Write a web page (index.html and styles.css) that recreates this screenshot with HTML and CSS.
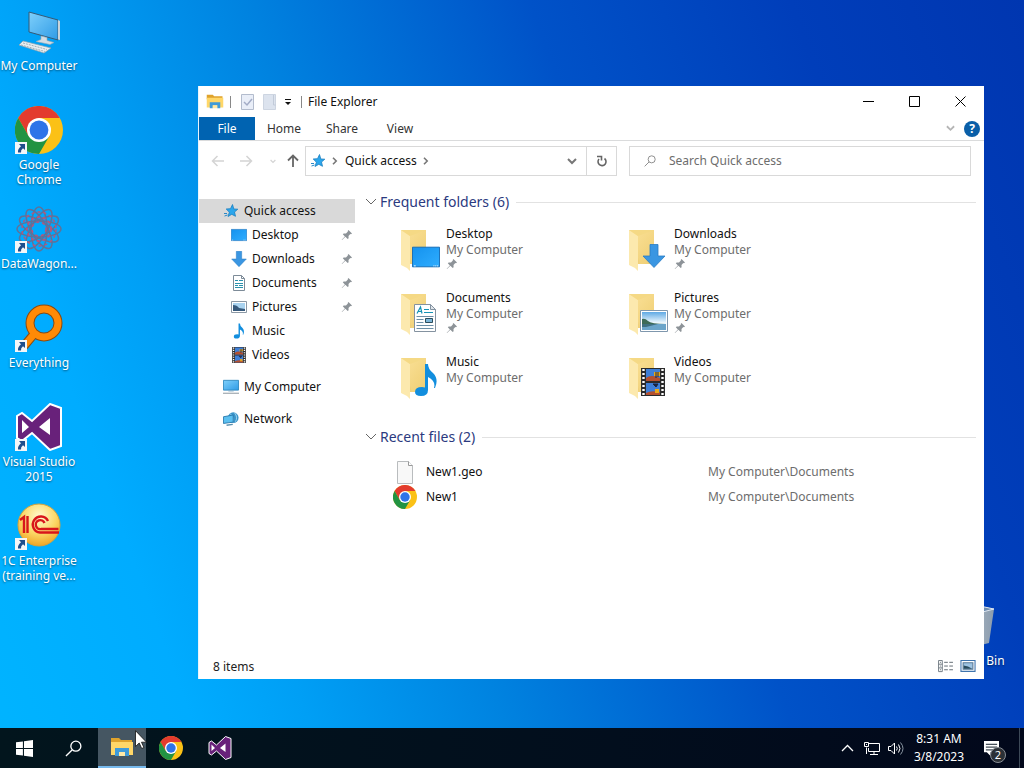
FILE: index.html
```html
<!DOCTYPE html>
<html lang="en">
<head>
    <meta charset="UTF-8">
    <meta name="viewport" content="width=device-width, initial-scale=1.0">
    <title>File Explorer</title>
    <link rel="stylesheet" href="styles.css">
</head>
<body>
    <!-- shared icons -->
    <svg class="sprite" aria-hidden="true">
      <defs>
        <linearGradient id="g-screen" x1="0" y1="0" x2="1" y2="1">
          <stop offset="0" stop-color="#7fd0fb"/><stop offset="1" stop-color="#2f9be6"/>
        </linearGradient>
        <linearGradient id="g-blue" x1="0" y1="0" x2="1" y2="1">
          <stop offset="0" stop-color="#1492ee"/><stop offset="1" stop-color="#2fadff"/>
        </linearGradient>
        <linearGradient id="g-fold" x1="0" y1="0" x2="1" y2="1">
          <stop offset="0" stop-color="#fbe29a"/><stop offset="1" stop-color="#efce73"/>
        </linearGradient>
        <linearGradient id="g-sky" x1="0" y1="0" x2="0" y2="1">
          <stop offset="0" stop-color="#5fa9e4"/><stop offset=".6" stop-color="#eef8fd"/>
        </linearGradient>
        <radialGradient id="g-gold" cx=".5" cy=".3" r=".75">
          <stop offset="0" stop-color="#fffbd0"/><stop offset=".55" stop-color="#fbd765"/><stop offset="1" stop-color="#ee9d1c"/>
        </radialGradient>
        <linearGradient id="g-bin" x1="0" y1="0" x2="1" y2="0">
          <stop offset="0" stop-color="#c3cbd2"/><stop offset="1" stop-color="#8b9cae"/>
        </linearGradient>
      </defs>
      <symbol id="chrome" viewBox="0 0 48 48">
        <circle cx="24" cy="24" r="24" fill="#fbc116"/>
        <path d="M24 12h20.8A24 24 0 0 0 3.2 12l10.4 18z" fill="#e33b2e"/>
        <path d="M3.2 12A24 24 0 0 0 24 48l10.4-18-10.4 4-10.4-4z" fill="#229342"/>
        <circle cx="24" cy="24" r="12" fill="#fff"/>
        <circle cx="24" cy="24" r="9.4" fill="#2f74e8"/>
      </symbol>
      <symbol id="vs" viewBox="0 0 48 48">
        <path d="M35 1 46 5v38l-11 4-18-17-10 8-5-3V13l5-3 10 8z" fill="#68217a" stroke="#fff" stroke-width="2"/>
        <path d="M35 15v17L24 24zM7 17v13l7-6z" fill="#fff"/>
      </symbol>
      <symbol id="shortcut" viewBox="0 0 12 12">
        <path d="M0 0h12v12H0z" fill="#f4f6f8"/>
        <path d="M4 2h6v6L8 6.300Q5.500 8 6 10.500H3Q2.500 7 6 4.200z" fill="#1f4e8c"/>
      </symbol>
      <symbol id="folder" viewBox="0 0 28 44">
        <path d="M1 2h25v34H9z" fill="#f0d07a"/>
        <path d="M1 2h25v34H12z" fill="url(#g-fold)"/>
        <path d="M1 2 10 8v35L7 40 1 37z" fill="#fce9ae"/>
        <path d="M1 2h25L10 8z" fill="#f5d985"/>
      </symbol>
      <symbol id="explorer" viewBox="0 0 24 20">
        <path d="M1 1h8l2 2h11v4H1z" fill="#dfa32c"/>
        <path d="M1 5h22v13H1z" fill="#ffd768"/>
        <path d="M5 19v-8h14v8h-4v-4H9v4z" fill="#3f9bd9"/>
        <path d="M9 15h6v4H9z" fill="#ffe9a6"/>
      </symbol>
      <symbol id="pin" viewBox="0 0 12 12">
        <path d="m7.500 1 3.500 3.500-1 .7-.7-.2-1.800 2 .1 2.200-.9.900-2.300-2.300L1 11l-.3-.3L3.900 7.400 1.800 5.300l.9-.9 2.300.1 1.900-1.900-.2-.7z" fill="#8d9398"/>
      </symbol>
      <symbol id="star" viewBox="0 0 16 16">
        <path d="M9.500 1.500 10.800 6l4 .2-3.300 2.800 1 4.300-3.700-2-3.800 2.200 1.400-4.300L3.200 6l4.300-.3z" fill="#2ba6ec" stroke="#1b7fc0" stroke-width=".8"/>
        <path d="M1 10.500h3M1.500 13l3-1" stroke="#2788c8" stroke-width="1"/>
      </symbol>
      <symbol id="desktop" viewBox="0 0 30 22">
        <path d="M.5.500h29v21H.5z" fill="url(#g-blue)" stroke="#1268b3"/>
        <path d="M2 20.500h2m19 0h1m1 0h1m1 0h1" stroke="#fff"/>
      </symbol>
      <symbol id="download" viewBox="0 0 24 24">
        <path d="M8 .5h8V12h7L12 23.500 1 12h7z" fill="#3a96e2" stroke="#2a7cc4" stroke-width=".8"/>
      </symbol>
      <symbol id="document" viewBox="0 0 22 28">
        <path d="M.5.500h16l5 5v22H.5z" fill="#fff" stroke="#8492a0"/>
        <path d="M16.500.500v5h5z" fill="#dfe5ea" stroke="#8492a0"/>
        <path d="M3 9.500 6.500 3 8 9.500M4.500 7.500h3M10 5.500h5M10 8.500h9" fill="none" stroke="#1593b5" stroke-width="1.200"/>
        <path d="M2.500 12.500h17M2.500 15.500h7m-7 3h7m-7 3h17m-17 3h17" stroke="#6c8fa6"/>
        <path d="M11.500 14.500h7v4h-7z" fill="#7fb7d9" stroke="#2c4c5b"/>
      </symbol>
      <symbol id="picture" viewBox="0 0 28 22">
        <path d="M.5.500h27v21H.5z" fill="#fff" stroke="#7f97ad"/>
        <path d="M2 2h24v18H2z" fill="url(#g-sky)"/>
        <path d="M2 9q3-1 6 2t18 3H2z" fill="#3d6b57"/>
        <path d="M2 14h24v6H2z" fill="#6ba5ca"/>
        <path d="M2 14h16l-12 3H2z" fill="#3f7080"/>
      </symbol>
      <symbol id="music" viewBox="0 0 22 34">
        <path d="M10 1h3q0 5 5 9 6 6 2 15h-1q2-7-6-11v13q0 6-7 6-6 0-6-4 0-5 7-5l3 .5z" fill="#128ede"/>
      </symbol>
      <symbol id="video" viewBox="0 0 24 28">
        <path d="M0 0h24v28H0z" fill="#2b2b2b"/>
        <path d="M2.500 1v27M21.500 1v27" stroke="#fff" stroke-width="2.400" stroke-dasharray="2 2"/>
        <path d="M5 1h14v12H5zM5 15h14v12H5z" fill="#3f7fd6"/>
        <path d="M5 10q5-4 14 0v3H5zM5 25q5-3 14-1v3H5z" fill="#b5502f"/>
        <path d="M13 4h6v4h-6zM14 21h4v4h-4z" fill="#e9a91c"/>
        <path d="M15 4v6M17 4v5M12 16h5l-2 3z" stroke="#1b2440" fill="#1b2440"/>
      </symbol>
      <symbol id="monitor" viewBox="0 0 18 16">
        <path d="M.5.500h17v11H.5z" fill="url(#g-screen)" stroke="#2c86be"/>
        <path d="M6 12.500h6" stroke="#82a9c1"/>
        <path d="M0 15h18" stroke="#7e8b94"/>
      </symbol>
      <symbol id="network" viewBox="0 0 18 16">
        <circle cx="11.500" cy="6.500" r="6" fill="#3b94c9"/>
        <path d="M8 2q5 4 3 10M13 1q4 5 1 10" fill="none" stroke="#a8dcf4"/>
        <path d="m.5 5.500 11-2v8l-11 1.500z" fill="#5cc0f0" stroke="#2576ac"/>
        <path d="m4 15 7-1" stroke="#5a8fae" stroke-width="1.500"/>
      </symbol>
      <symbol id="chev-down" viewBox="0 0 12 8">
        <path d="m1 1 5 5 5-5" fill="none" stroke="currentColor"/>
      </symbol>
      <symbol id="chev-bold" viewBox="0 0 10 7">
        <path d="m1 1 4 4 4-4" fill="none" stroke="currentColor" stroke-width="2"/>
      </symbol>
      <symbol id="arrow" viewBox="0 0 14 12">
        <path d="M13 6H1.500M6.500 1l-5 5 5 5" fill="none" stroke="currentColor" stroke-width="1.500"/>
      </symbol>
      <symbol id="arrow-up" viewBox="0 0 12 14">
        <path d="M6 13V2M1 6.500l5-5 5 5" fill="none" stroke="currentColor" stroke-width="1.800"/>
      </symbol>
      <symbol id="lens" viewBox="0 0 18 18">
        <path d="M7.500 10.500 1 17" fill="none" stroke="currentColor" stroke-width="1.400"/>
        <circle cx="11.500" cy="6.500" r="5.300" fill="none" stroke="currentColor" stroke-width="1.400"/>
      </symbol>
    </svg>

    <main class="desktop">
      <div class="desktop-icons">
        <a href="#" class="desktop-item">
          <span class="desktop-icon">
            <svg viewBox="0 0 48 48">
              <path d="m14 5 29 8v20l-29-8z" fill="url(#g-screen)" stroke="#355a76" stroke-width="1"/>
              <path d="m43 13 2 1v19l-2-.5z" fill="#c9d3da"/>
              <path d="m26 29 6 1.500v3l7 2-4 2-14-3 5-2z" fill="#d4dde4" stroke="#9aa8b2" stroke-width=".6"/>
              <path d="m8 34 28 7-7 5-25-8z" fill="#e9eef1" stroke="#94a3ae" stroke-width=".7"/>
              <path d="m8 36 24 6.500M6 38l24 6.500" stroke="#a2aeb6" stroke-dasharray="2 1"/>
            </svg>
          </span>
          <span class="desktop-label">My Computer</span>
        </a>
        <a href="#" class="desktop-item">
          <span class="desktop-icon">
            <svg><use href="#chrome"/></svg>
            <svg class="badge"><use href="#shortcut"/></svg>
          </span>
          <span class="desktop-label">Google Chrome</span>
        </a>
        <a href="#" class="desktop-item">
          <span class="desktop-icon">
            <svg viewBox="0 0 48 48" fill="none" stroke="#5f7299" stroke-width="1.500">
              <g>
                <ellipse cx="24" cy="24" rx="22" ry="8"/>
                <ellipse cx="24" cy="24" rx="22" ry="8" transform="rotate(30 24 24)"/>
                <ellipse cx="24" cy="24" rx="22" ry="8" transform="rotate(60 24 24)"/>
                <ellipse cx="24" cy="24" rx="22" ry="8" transform="rotate(90 24 24)"/>
                <ellipse cx="24" cy="24" rx="22" ry="8" transform="rotate(120 24 24)"/>
                <ellipse cx="24" cy="24" rx="22" ry="8" transform="rotate(150 24 24)"/>
              </g>
              <g stroke="#b4577f" stroke-dasharray="3 3">
                <circle cx="24" cy="24" r="7"/>
                <circle cx="24" cy="24" r="12" stroke-width="2"/>
                <circle cx="24" cy="24" r="17"/>
              </g>
            </svg>
            <svg class="badge"><use href="#shortcut"/></svg>
          </span>
          <span class="desktop-label">DataWagon...</span>
        </a>
        <a href="#" class="desktop-item">
          <span class="desktop-icon">
            <svg viewBox="0 0 48 48" fill="none">
              <path d="M19 30 9 42" stroke="#8a4a10" stroke-width="9"/>
              <circle cx="29" cy="19" r="14" stroke="#8a4a10" stroke-width="9"/>
              <path d="M20 29 9 42" stroke="#ff8a06" stroke-width="7"/>
              <circle cx="29" cy="19" r="14" stroke="#ff8a06" stroke-width="7"/>
            </svg>
            <svg class="badge"><use href="#shortcut"/></svg>
          </span>
          <span class="desktop-label">Everything</span>
        </a>
        <a href="#" class="desktop-item">
          <span class="desktop-icon">
            <svg><use href="#vs"/></svg>
            <svg class="badge"><use href="#shortcut"/></svg>
          </span>
          <span class="desktop-label">Visual Studio 2015</span>
        </a>
        <a href="#" class="desktop-item">
          <span class="desktop-icon">
            <svg viewBox="0 0 48 48">
              <circle cx="24" cy="23" r="21" fill="url(#g-gold)" stroke="#d9a33a"/>
              <g fill="none" stroke="#d8161b" stroke-width="2.400">
                <path d="M5 18l4-3v16M12.500 31V14"/>
                <path d="M33 19a8 8 0 1 0-8 11.500h19"/>
                <path d="M29.500 21a4.500 4.500 0 1 0-3 6h17"/>
              </g>
            </svg>
            <svg class="badge"><use href="#shortcut"/></svg>
          </span>
          <span class="desktop-label">1C Enterprise (training ve...</span>
        </a>
      </div>

      <a href="#" class="desktop-item recycle-bin">
        <span class="desktop-icon">
          <svg viewBox="0 0 48 48">
            <path d="m4 8 22-5 19 4-5 34-16 4-14-4z" fill="url(#g-bin)"/>
            <path d="m4 8 22-5 19 4-19 5z" fill="#6f8db0" stroke="#dfe8f2"/>
          </svg>
        </span>
        <span class="desktop-label">Recycle Bin</span>
      </a>

      <section class="window">
        <header class="title-bar">
          <svg class="icon-title"><use href="#explorer"/></svg>
          <span class="title-sep"></span>
          <button class="quick-btn" aria-label="Properties">
            <svg viewBox="0 0 14 16"><path d="M.5.500h12v15H.5z" fill="#e9eef8" stroke="#b3bccd"/><path d="m3 8 3 3 5-6" fill="none" stroke="#a3acc6" stroke-width="1.500"/></svg>
          </button>
          <button class="quick-btn" aria-label="New folder">
            <svg viewBox="0 0 14 16"><path d="M.5.500h12v15H.5z" fill="#dce3ee" stroke="#cdd5e1"/><path d="M10.500 1v10h2" fill="none" stroke="#c2cbd9"/></svg>
          </button>
          <button class="quick-more" aria-label="Customize">
            <svg viewBox="0 0 8 8"><path d="M1 1.500h6" stroke="#111"/><path d="M1 4h6L4 7z" fill="#111"/></svg>
          </button>
          <span class="title-sep"></span>
          <h1 class="title">File Explorer</h1>
          <div class="caption-buttons">
            <button aria-label="Minimize"><svg viewBox="0 0 11 11"><path d="M0 5.500h11" stroke="#000"/></svg></button>
            <button aria-label="Maximize"><svg viewBox="0 0 11 11"><path d="M.5.500h10v10H.5z" fill="none" stroke="#000"/></svg></button>
            <button aria-label="Close"><svg viewBox="0 0 11 11"><path d="m.5.500 10 10m0-10-10 10" stroke="#000"/></svg></button>
          </div>
        </header>

        <nav class="ribbon">
          <button class="tab tab-file">File</button>
          <button class="tab">Home</button>
          <button class="tab">Share</button>
          <button class="tab">View</button>
          <button class="ribbon-toggle" aria-label="Expand the ribbon"><svg><use href="#chev-bold"/></svg></button>
          <button class="help" aria-label="Help">?</button>
        </nav>

        <div class="toolbar">
          <div class="nav-buttons">
            <button class="dim" aria-label="Back"><svg class="arrow"><use href="#arrow"/></svg></button>
            <button class="dim" aria-label="Forward"><svg class="arrow forward"><use href="#arrow"/></svg></button>
            <button class="dim small" aria-label="Recent locations"><svg class="tiny"><use href="#chev-bold"/></svg></button>
            <button aria-label="Up"><svg class="arrow-up"><use href="#arrow-up"/></svg></button>
          </div>
          <div class="address">
            <svg class="icon16"><use href="#star"/></svg>
            <svg class="crumb-sep"><use href="#chev-bold"/></svg>
            <a href="#" class="crumb">Quick access</a>
            <svg class="crumb-sep"><use href="#chev-bold"/></svg>
            <button class="address-drop" aria-label="Previous locations"><svg><use href="#chev-bold"/></svg></button>
            <button class="refresh" aria-label="Refresh">
              <svg viewBox="0 0 12 14"><path d="M8.500 4.500A4 4 0 1 1 3 5M1 2.500h4.500v4" fill="none" stroke="#666" stroke-width="1.600"/></svg>
            </button>
          </div>
          <label class="search">
            <svg><use href="#lens"/></svg>
            <input type="text" placeholder="Search Quick access" aria-label="Search Quick access">
          </label>
        </div>

        <div class="content">
          <nav class="side">
            <a href="#" class="side-item selected"><svg><use href="#star"/></svg>Quick access</a>
            <a href="#" class="side-item sub"><svg><use href="#desktop"/></svg>Desktop<svg class="pin"><use href="#pin"/></svg></a>
            <a href="#" class="side-item sub"><svg><use href="#download"/></svg>Downloads<svg class="pin"><use href="#pin"/></svg></a>
            <a href="#" class="side-item sub">
              <svg viewBox="0 0 16 16"><path d="M2.500.500h8l3 3v12h-11z" fill="#fff" stroke="#7d8b98"/><path d="M10.500.500v3h3" fill="none" stroke="#7d8b98"/><path d="M4 5.500h3m1 0h4M4 8.500h8M4 10.500h3m1 0h4M4 12.500h8" stroke="#2b92ad"/></svg>
              Documents<svg class="pin"><use href="#pin"/></svg>
            </a>
            <a href="#" class="side-item sub">
              <svg viewBox="0 0 16 16"><path d="M.5 2.500h15v11H.5z" fill="#fff" stroke="#8b98a5"/><path d="M2 4h12v8H2z" fill="#a9d3f0"/><path d="M2 6q4 0 6 3l6 1v2H2z" fill="#36597c"/></svg>
              Pictures<svg class="pin"><use href="#pin"/></svg>
            </a>
            <a href="#" class="side-item sub"><svg><use href="#music"/></svg>Music</a>
            <a href="#" class="side-item sub"><svg><use href="#video"/></svg>Videos</a>
            <a href="#" class="side-item root"><svg><use href="#monitor"/></svg>My Computer</a>
            <a href="#" class="side-item root"><svg><use href="#network"/></svg>Network</a>
          </nav>

          <div class="files">
            <h2 class="group"><svg><use href="#chev-down"/></svg>Frequent folders (6)</h2>
            <div class="folders">
              <a href="#" class="folder">
                <span class="folder-icon"><svg class="back"><use href="#folder"/></svg><svg class="front wide"><use href="#desktop"/></svg></span>
                <span class="folder-text"><span>Desktop</span><span class="muted">My Computer</span><svg class="pin"><use href="#pin"/></svg></span>
              </a>
              <a href="#" class="folder">
                <span class="folder-icon"><svg class="back"><use href="#folder"/></svg><svg class="front down"><use href="#download"/></svg></span>
                <span class="folder-text"><span>Downloads</span><span class="muted">My Computer</span><svg class="pin"><use href="#pin"/></svg></span>
              </a>
              <a href="#" class="folder">
                <span class="folder-icon"><svg class="back"><use href="#folder"/></svg><svg class="front page"><use href="#document"/></svg></span>
                <span class="folder-text"><span>Documents</span><span class="muted">My Computer</span><svg class="pin"><use href="#pin"/></svg></span>
              </a>
              <a href="#" class="folder">
                <span class="folder-icon"><svg class="back"><use href="#folder"/></svg><svg class="front wide"><use href="#picture"/></svg></span>
                <span class="folder-text"><span>Pictures</span><span class="muted">My Computer</span><svg class="pin"><use href="#pin"/></svg></span>
              </a>
              <a href="#" class="folder">
                <span class="folder-icon"><svg class="back"><use href="#folder"/></svg><svg class="front note"><use href="#music"/></svg></span>
                <span class="folder-text"><span>Music</span><span class="muted">My Computer</span></span>
              </a>
              <a href="#" class="folder">
                <span class="folder-icon"><svg class="back"><use href="#folder"/></svg><svg class="front page"><use href="#video"/></svg></span>
                <span class="folder-text"><span>Videos</span><span class="muted">My Computer</span></span>
              </a>
            </div>

            <h2 class="group"><svg><use href="#chev-down"/></svg>Recent files (2)</h2>
            <table class="recent">
              <tr>
                <td class="file-icon"><svg viewBox="0 0 24 24"><path d="M4.500 1.500h11l4 4v18h-15z" fill="#f8f8f8" stroke="#b9bcbe"/><path d="M15.500 1.500v4h4" fill="#fff" stroke="#999"/></svg></td>
                <td>New1.geo</td>
                <td class="muted">My Computer\Documents</td>
              </tr>
              <tr>
                <td class="file-icon"><svg><use href="#chrome"/></svg></td>
                <td>New1</td>
                <td class="muted">My Computer\Documents</td>
              </tr>
            </table>
          </div>
        </div>

        <footer class="status">
          <span>8 items</span>
          <button class="view-btn" aria-label="Details">
            <svg viewBox="0 0 17 14"><path d="M.5.500h4v12h-4zM.5 4.500h4m-4 4h4" fill="#fff" stroke="#6d7780"/><path d="M2 2.500h1m-1 4h1m-1 4h1M6.500 2.500h4m1.500 0h4m-9.500 4h4m1.500 0h4m-9.500 4h4m1.500 0h4" stroke="#5b646c"/></svg>
          </button>
          <button class="view-btn" aria-label="Large icons">
            <svg viewBox="0 0 14 12"><path d="M.5.500h13v10H.5z" fill="#fff" stroke="#3f74ad"/><path d="M2.500 2.500h9v6h-9z" fill="#9dc3e2" stroke="#5a7a96"/><path d="M3 5l4 1 4 2H3z" fill="#2a4c5e"/></svg>
          </button>
        </footer>
      </section>
    </main>

    <footer class="taskbar">
      <button class="task" aria-label="Start">
        <svg class="start" viewBox="0 0 16 16" fill="#fff"><path d="M0 2.200 6.500 1.300v6.200H0zM7.500 1.200 16 0v7.500H7.500zM0 8.500h6.500v6.200L0 13.800zM7.500 8.500H16V16l-8.500-1.200z"/></svg>
      </button>
      <button class="task" aria-label="Search"><svg class="start"><use href="#lens"/></svg></button>
      <button class="task active" aria-label="File Explorer"><svg><use href="#explorer"/></svg></button>
      <button class="task" aria-label="Google Chrome"><svg><use href="#chrome"/></svg></button>
      <button class="task" aria-label="Visual Studio 2015"><svg><use href="#vs"/></svg></button>
      <div class="tray">
        <button aria-label="Show hidden icons"><svg viewBox="0 0 17 15"><path d="m3 10 5.500-5.500L14 10" fill="none" stroke="#fff" stroke-width="1.300"/></svg></button>
        <button aria-label="Network">
          <svg viewBox="0 0 17 15" fill="none" stroke="#fff"><path d="M6 2.500h10.500v8H5.500V7M11 10.500v3M7 13.500h8M3.500 6.500v6.500"/><path d="M1.500 1.500h4v4h-4zM3 3.500h1"/></svg>
        </button>
        <button aria-label="Volume">
          <svg viewBox="0 0 17 15" fill="none" stroke="#fff"><path d="M1.500 5.500H4L7.500 2v11L4 9.500H1.500z"/><path d="M9.500 5.500q1.500 2 0 4M11.500 3.500q3 4 0 8"/><path d="M13.500 1.500q5 6 0 12" stroke="#8b97a3"/></svg>
        </button>
        <button class="clock"><span>8:31 AM</span><span>3/8/2023</span></button>
        <button class="notify" aria-label="Notifications">
          <svg viewBox="0 0 18 16"><path d="M1 0h16v12H8v4l-4-4H1z" fill="#fff"/><path d="M3 3.500h12M3 6.500h12M3 9.500h8" stroke="#04121f"/></svg>
          <span class="count">2</span>
        </button>
        <button class="show-desktop" aria-label="Show desktop"></button>
      </div>
    </footer>

    <svg class="cursor" viewBox="0 0 12 19"><path d="M.5.700v15.800l3.700-3.500 2.500 5.500 2.200-1-2.400-5.300h5z" fill="#fff" stroke="#111" stroke-width=".8"/></svg>
</body>
</html>
```
FILE: styles.css
```css
* {
  box-sizing: border-box;
}

body {
  margin: 0;
  height: 100vh;
  display: flex;
  flex-direction: column;
  overflow: hidden;
  font-family: "Noto Sans", "Open Sans", sans-serif;
  font-size: 12px;
  line-height: 16px;
  color: #111;
  background: linear-gradient(70deg, #00b4ff 0%, #00acff 16%, #009ff5 25%, #0083e0 40%, #0052c8 62%, #003eba 82%, #0036b0 100%);
}

button {
  display: flex;
  align-items: center;
  justify-content: center;
  padding: 0;
  border: none;
  background: none;
  font: inherit;
  color: inherit;
}

a {
  color: inherit;
  text-decoration: none;
}

svg {
  flex: none;
}

.sprite {
  position: absolute;
  width: 0;
  height: 0;
}

/* desktop */
.desktop {
  position: relative;
  flex: 1;
}

.desktop-icons {
  display: grid;
  grid-auto-rows: 99px;
  width: 78px;
  padding-top: 7px;
}

.desktop-item {
  display: flex;
  flex-direction: column;
  align-items: center;
  gap: 3px;
  width: 78px;
  color: #fff;
  line-height: 15px;
  text-align: center;
  text-shadow: 0 1px 2px rgba(0,0,0,0.5);
}

.desktop-icon {
  position: relative;
  width: 48px;
  height: 48px;
}

.desktop-icon svg {
  display: block;
  width: 48px;
  height: 48px;
}

.desktop-icon .badge {
  position: absolute;
  left: 0;
  bottom: 0;
  width: 12px;
  height: 12px;
}

.recycle-bin {
  position: absolute;
  right: 12px;
  bottom: 60px;
}

/* explorer window */
.window {
  position: absolute;
  left: 198px;
  right: 40px;
  top: 86px;
  bottom: 49px;
  display: flex;
  flex-direction: column;
  background-color: #fff;
  border-left: 1px solid #e8f4fc;
}

.title-bar {
  display: flex;
  align-items: center;
  height: 31px;
  padding: 0 1px 0 7px;
}

.icon-title {
  width: 18px;
  height: 15px;
}

.title-sep {
  width: 1px;
  height: 12px;
  margin: 0 6px;
  background-color: #888;
}

.quick-btn {
  width: 22px;
  height: 22px;
}

.quick-btn svg {
  width: 14px;
  height: 16px;
}

.quick-more {
  width: 14px;
  height: 22px;
}

.quick-more svg {
  width: 8px;
  height: 8px;
}

.title {
  flex: 1;
  margin: 0;
  font-size: 12px;
  font-weight: normal;
}

.caption-buttons {
  display: flex;
}

.caption-buttons button {
  width: 46px;
  height: 31px;
}

.caption-buttons svg {
  width: 11px;
  height: 11px;
}

.ribbon {
  display: flex;
  align-items: center;
  height: 24px;
  padding-right: 4px;
  border-bottom: 1px solid #dadbdc;
}

.tab {
  width: 58px;
  height: 23px;
  color: #333;
}

.tab-file {
  width: 56px;
  background-color: #0063b1;
  color: #fff;
}

.ribbon-toggle {
  width: 28px;
  height: 22px;
  margin-left: auto;
  color: #b5b5b5;
}

.ribbon-toggle svg {
  width: 9px;
  height: 7px;
}

.help {
  width: 16px;
  height: 16px;
  border-radius: 50%;
  background-color: #0a5fa8;
  color: #fff;
  font-weight: bold;
}

.toolbar {
  display: grid;
  grid-template-columns: 98px 312fr 12px 342fr;
  padding: 5px 13px 8px 8px;
}

.nav-buttons {
  display: flex;
  align-items: center;
  color: #666;
}

.nav-buttons button {
  width: 20px;
  height: 30px;
}

.nav-buttons .dim {
  width: 34px;
  color: #d4d4d4;
}

.nav-buttons .dim:first-child {
  width: 22px;
}

.nav-buttons .small {
  width: 20px;
}

.arrow {
  width: 14px;
  height: 12px;
}

.arrow-up {
  width: 12px;
  height: 14px;
}

.forward {
  transform: rotate(180deg);
}

.tiny {
  width: 6px;
  height: 5px;
}

.address {
  display: flex;
  align-items: center;
  height: 30px;
  padding-left: 4px;
  border: 1px solid #d9d9d9;
}

.icon16 {
  width: 16px;
  height: 16px;
}

.crumb-sep {
  width: 8px;
  height: 6px;
  margin: 0 5px;
  color: #777;
  transform: rotate(-90deg);
}

.crumb {
  margin-left: 1px;
}

.address-drop {
  width: 29px;
  height: 28px;
  margin-left: auto;
  color: #777;
}

.address-drop svg {
  width: 10px;
  height: 7px;
}

.refresh {
  width: 30px;
  height: 28px;
  border-left: 1px solid #d9d9d9;
}

.refresh svg {
  width: 12px;
  height: 14px;
}

.search {
  grid-column: 4;
  display: flex;
  align-items: center;
  gap: 13px;
  height: 30px;
  padding-left: 14px;
  border: 1px solid #d9d9d9;
  color: #888;
}

.search svg {
  width: 12px;
  height: 12px;
}

.search input {
  flex: 1;
  min-width: 0;
  padding: 0;
  border: none;
  outline: none;
  background: none;
  font: inherit;
}

.search input::placeholder {
  color: #6d6d6d;
}

.content {
  flex: 1;
  display: flex;
  min-height: 0;
}

/* left pane */
.side {
  width: 156px;
  padding-top: 15px;
}

.side-item {
  display: flex;
  align-items: center;
  gap: 5px;
  height: 24px;
  padding-left: 24px;
}

.side-item svg {
  width: 16px;
  height: 16px;
}

.side-item.selected {
  background-color: #d9d9d9;
}

.side-item.sub {
  padding-left: 32px;
}

.side-item.root {
  margin-top: 8px;
}

.side-item .pin {
  margin-left: auto;
  margin-right: 2px;
}

.side-item .pin,
.folder .pin {
  width: 12px;
  height: 12px;
}

/* right pane */
.files {
  flex: 1;
  padding: 8px 8px 0 10px;
}

.group {
  display: flex;
  align-items: center;
  gap: 3px;
  height: 20px;
  margin: 0;
  font-size: 14px;
  font-weight: normal;
  color: #2b3a80;
}

.group svg {
  width: 12px;
  height: 8px;
  color: #666;
}

.group::after {
  content: "";
  flex: 1;
  height: 1px;
  margin-left: 4px;
  background-color: #e2e2e2;
}

.folders {
  display: grid;
  grid-template-columns: repeat(auto-fill, 228px);
  grid-auto-rows: 64px;
  padding: 14px 0 9px 35px;
}

.folder {
  display: flex;
  gap: 5px;
}

.folder-icon {
  position: relative;
  width: 41px;
  height: 48px;
}

.folder-icon .back {
  width: 28px;
  height: 44px;
  margin-top: 2px;
}

.folder-icon .front {
  position: absolute;
  right: 1px;
  bottom: 6px;
  width: 28px;
  height: 22px;
}

.folder-icon .down {
  bottom: 6px;
  right: 3px;
  width: 24px;
  height: 24px;
}

.folder-icon .page {
  right: 4px;
  width: 24px;
  height: 28px;
}

.folder-icon .note {
  bottom: 5px;
  right: 4px;
  width: 22px;
  height: 34px;
}

.folder-text {
  display: flex;
  flex-direction: column;
  gap: 0;
}

.muted {
  color: #6d6d6d;
}

.recent {
  width: 100%;
  margin-top: 12px;
  padding-left: 28px;
  border-spacing: 0;
}

.recent td {
  width: 282px;
  height: 25px;
  padding: 0;
}

.recent td:last-child {
  width: auto;
}

.recent .file-icon {
  width: 33px;
}

.file-icon svg {
  display: block;
  width: 24px;
  height: 24px;
}

.status {
  display: flex;
  align-items: center;
  gap: 6px;
  height: 25px;
  padding: 0 8px 0 14px;
  color: #222;
}

.status span {
  flex: 1;
}

.view-btn svg {
  width: 16px;
  height: 13px;
}

/* taskbar */
.taskbar {
  display: flex;
  gap: 1px;
  height: 40px;
  background: linear-gradient(90deg, #02151d, #020e1d 60%, #02081b);
  color: #fff;
}

.task {
  width: 48px;
}

.task svg {
  width: 24px;
  height: 24px;
}

.task .start {
  width: 17px;
  height: 17px;
}

.task.active {
  background-color: #455662;
  border-bottom: 2px solid #76b9ed;
}

.tray {
  display: flex;
  margin-left: auto;
}

.tray button {
  width: 24px;
}

.tray svg {
  width: 17px;
  height: 15px;
}

.tray .clock {
  flex-direction: column;
  width: 64px;
  line-height: 18px;
}

.tray .notify {
  position: relative;
  width: 48px;
  padding-right: 8px;
}

.count {
  position: absolute;
  left: 19px;
  top: 19px;
  width: 16px;
  height: 16px;
  border: 1px solid #8a8f96;
  border-radius: 50%;
  background-color: #2b3036;
  font-size: 11px;
  line-height: 14px;
}

.tray .show-desktop {
  width: 5px;
  border-left: 1px solid #3d4957;
}

.cursor {
  position: absolute;
  left: 135px;
  top: 730px;
  width: 12px;
  height: 19px;
}
```
